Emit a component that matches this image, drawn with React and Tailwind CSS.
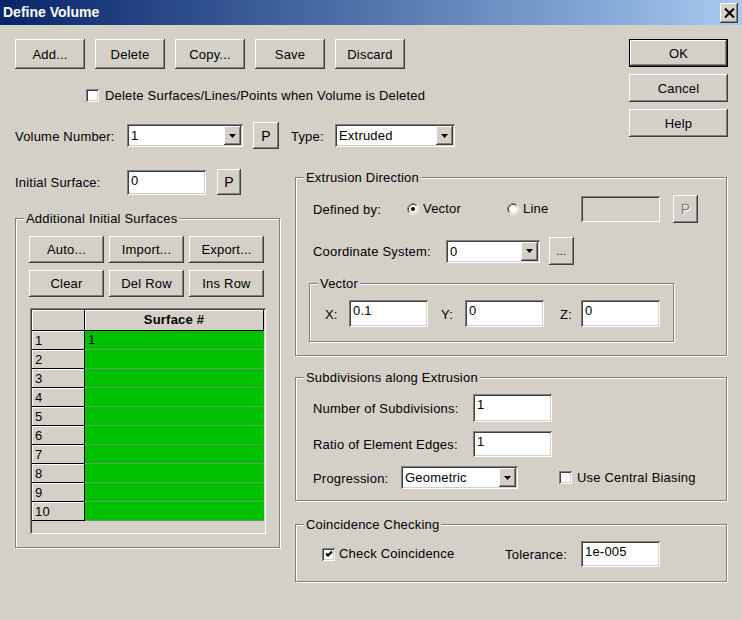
import React from "react";

const RAISED =
  "shadow-[inset_-1px_-1px_#404040,inset_1px_1px_#ffffff,inset_-2px_-2px_#808080,inset_2px_2px_#d4d0c8]";
const DEFAULT_BTN =
  "shadow-[inset_0_0_0_1px_#000000,inset_-2px_-2px_#404040,inset_2px_2px_#ffffff,inset_-3px_-3px_#808080]";
const SUNKEN =
  "shadow-[inset_1px_1px_#808080,inset_-1px_-1px_#ffffff,inset_2px_2px_#404040,inset_-2px_-2px_#d4d0c8]";
const HDR = "bg-[#d4d0c8] border-r border-b border-black shadow-[inset_1px_1px_#ffffff]";

function Btn({ className = "", children, disabled, isDefault }) {
  return (
    <button
      type="button"
      className={`flex items-center justify-center bg-[#d4d0c8] leading-none ${isDefault ? DEFAULT_BTN : RAISED} ${
        disabled ? "text-[#808080] [text-shadow:1px_1px_#ffffff]" : "text-black"
      } ${className}`}
    >
      {children}
    </button>
  );
}

function Field({ className = "", value, disabled }) {
  return (
    <div
      className={`${SUNKEN} ${disabled ? "bg-[#d4d0c8]" : "bg-white"} px-[4px] pt-[3px] leading-[15px] ${className}`}
    >
      {value}
    </div>
  );
}

function Combo({ className = "", value }) {
  return (
    <div className={`${SUNKEN} bg-white flex items-center p-[2px] ${className}`}>
      <span className="flex-1 pl-[2px] leading-[15px]">{value}</span>
      <div className={`w-[17px] h-full bg-[#d4d0c8] ${RAISED} flex items-center justify-center`}>
        <svg width="7" height="4" viewBox="0 0 7 4">
          <path d="M0 0h7L3.5 4z" fill="#000" />
        </svg>
      </div>
    </div>
  );
}

function Check({ checked }) {
  return (
    <div className={`w-[13px] h-[13px] shrink-0 bg-white ${SUNKEN} flex items-center justify-center`}>
      {checked && (
        <svg width="8" height="8" viewBox="0 0 8 8">
          <path d="M1 3.5 L3 5.5 L7 1.5" stroke="#000" strokeWidth="2" fill="none" />
        </svg>
      )}
    </div>
  );
}

function Radio({ checked }) {
  return (
    <svg width="12" height="12" viewBox="0 0 12 12" className="shrink-0">
      <circle cx="6" cy="6" r="5" fill="#fff" />
      <path d="M2.11 9.89 A5.5 5.5 0 0 1 9.89 2.11" stroke="#808080" fill="none" />
      <path d="M2.82 9.18 A4.5 4.5 0 0 1 9.18 2.82" stroke="#404040" fill="none" />
      <path d="M9.89 2.11 A5.5 5.5 0 0 1 2.11 9.89" stroke="#ffffff" fill="none" />
      <path d="M9.18 2.82 A4.5 4.5 0 0 1 2.82 9.18" stroke="#d4d0c8" fill="none" />
      {checked && <circle cx="6" cy="6" r="2" fill="#000" />}
    </svg>
  );
}

function Group({ title, className = "", children }) {
  return (
    <div className={`border border-[#808080] shadow-[inset_1px_1px_#ffffff,1px_1px_#ffffff] ${className}`}>
      <div className="-mt-[8px] ml-[8px] w-fit px-[2px] bg-[#d4d0c8] leading-[15px]">{title}</div>
      {children}
    </div>
  );
}

function SurfaceGrid() {
  const rows = [1, 2, 3, 4, 5, 6, 7, 8, 9, 10];
  return (
    <div className={`mt-[11px] ml-[14px] w-[236px] h-[226px] p-[2px] bg-[#d4d0c8] ${SUNKEN}`}>
      <div className="flex h-[21px]">
        <div className={`w-[53px] ${HDR}`} />
        <div className={`w-[179px] ${HDR} flex items-center justify-center font-bold`}>Surface #</div>
      </div>
      {rows.map((n) => (
        <div key={n} className="flex h-[19px]">
          <div className={`w-[53px] ${HDR} pl-[3px] pt-[1px] flex items-center`}>{n}</div>
          <div className="w-[179px] bg-[#00c000] border-b border-[#5f9f5f] pl-[3px] flex items-center">
            {n === 1 ? "1" : ""}
          </div>
        </div>
      ))}
    </div>
  );
}

export default function App() {
  return (
    <div className="w-[742px] h-[620px] overflow-hidden bg-[#d4d0c8] text-black text-[13px] tracking-[0.2px] font-['Liberation_Sans',Arial,sans-serif]">
      {/* title bar */}
      <div className="h-[25px] flex items-center justify-between pl-[3px] pr-[4px] bg-linear-to-r from-[#0a246a] to-[#a6caf0]">
        <span className="text-white font-bold text-[14px] tracking-normal">Define Volume</span>
        <div className={`w-[18px] h-[20px] bg-[#d4d0c8] ${RAISED} flex items-center justify-center`}>
          <svg width="11" height="10" viewBox="0 0 11 10">
            <path d="M1 0.5 L10 9.5 M10 0.5 L1 9.5" stroke="#000" strokeWidth="2" />
          </svg>
        </div>
      </div>

      {/* top section */}
      <div className="flex pl-[15px] pt-[14px]">
        <div className="flex-1">
          <div className="flex gap-[10px] h-[30px]">
            <Btn className="w-[70px] h-[30px]">Add...</Btn>
            <Btn className="w-[70px] h-[30px]">Delete</Btn>
            <Btn className="w-[70px] h-[30px]">Copy...</Btn>
            <Btn className="w-[70px] h-[30px]">Save</Btn>
            <Btn className="w-[70px] h-[30px]">Discard</Btn>
          </div>
          <div className="mt-[16px] h-[20px] pl-[71px] flex items-center gap-[6px]">
            <Check />
            <span className="pt-[1px]">Delete Surfaces/Lines/Points when Volume is Deleted</span>
          </div>
          <div className="mt-[17px] h-[27px] flex items-center">
            <span className="w-[112px] pt-[2px]">Volume Number:</span>
            <Combo className="w-[116px] h-[23px]" value="1" />
            <Btn className="ml-[10px] w-[26px] h-[27px] text-[14px]">P</Btn>
            <span className="ml-[12px] w-[44px] pt-[2px]">Type:</span>
            <Combo className="w-[120px] h-[23px]" value="Extruded" />
          </div>
        </div>
        <div className="w-[99px] mr-[14px] flex flex-col gap-[7px]">
          <Btn isDefault className="w-[99px] h-[28px]">OK</Btn>
          <Btn className="w-[99px] h-[28px]">Cancel</Btn>
          <Btn className="w-[99px] h-[28px]">Help</Btn>
        </div>
      </div>

      {/* lower section */}
      <div className="flex pl-[15px] mt-[20px] gap-[15px]">
        {/* left column */}
        <div className="w-[265px]">
          <div className="h-[26px] flex items-center">
            <span className="w-[112px] pt-[2px]">Initial Surface:</span>
            <Field className="w-[79px] h-[25px]" value="0" />
            <Btn className="ml-[11px] w-[24px] h-[26px] text-[14px]">P</Btn>
          </div>
          <Group title="Additional Initial Surfaces" className="mt-[23px] w-[265px] h-[330px]">
            <div className="mt-[10px] pl-[13px] flex gap-[5px]">
              <Btn className="w-[75px] h-[27px]">Auto...</Btn>
              <Btn className="w-[75px] h-[27px]">Import...</Btn>
              <Btn className="w-[75px] h-[27px]">Export...</Btn>
            </div>
            <div className="mt-[7px] pl-[13px] flex gap-[5px]">
              <Btn className="w-[75px] h-[27px]">Clear</Btn>
              <Btn className="w-[75px] h-[27px]">Del Row</Btn>
              <Btn className="w-[75px] h-[27px]">Ins Row</Btn>
            </div>
            <SurfaceGrid />
          </Group>
        </div>

        {/* right column */}
        <div className="w-[432px] pt-[8px]">
          <Group title="Extrusion Direction" className="w-[432px] h-[179px]">
            <div className="mt-[10px] h-[28px] pl-[17px] flex items-center">
              <span className="w-[94px] pt-[2px]">Defined by:</span>
              <div className="w-[100px] flex items-center gap-[4px]">
                <Radio checked />
                <span>Vector</span>
              </div>
              <div className="w-[74px] flex items-center gap-[4px]">
                <Radio />
                <span>Line</span>
              </div>
              <Field disabled className="w-[79px] h-[26px]" value="" />
              <Btn disabled className="ml-[13px] w-[25px] h-[28px] text-[14px]">P</Btn>
            </div>
            <div className="mt-[14px] h-[28px] pl-[17px] flex items-center">
              <span className="w-[133px] pt-[2px]">Coordinate System:</span>
              <Combo className="w-[94px] h-[23px]" value="0" />
              <Btn className="ml-[9px] w-[25px] h-[28px] text-[11px]">...</Btn>
            </div>
            <Group title="Vector" className="ml-[13px] mt-[18px] w-[365px] h-[59px]">
              <div className="mt-[9px] h-[27px] pl-[15px] flex items-center">
                <span className="w-[24px] pt-[2px]">X:</span>
                <Field className="w-[79px] h-[27px]" value="0.1" />
                <span className="ml-[13px] w-[24px] pt-[2px]">Y:</span>
                <Field className="w-[79px] h-[27px]" value="0" />
                <span className="ml-[16px] w-[21px] pt-[2px]">Z:</span>
                <Field className="w-[79px] h-[27px]" value="0" />
              </div>
            </Group>
          </Group>

          <Group title="Subdivisions along Extrusion" className="mt-[21px] w-[432px] h-[124px]">
            <div className="mt-[9px] h-[28px] pl-[17px] flex items-center">
              <span className="w-[160px] pt-[2px]">Number of Subdivisions:</span>
              <Field className="w-[79px] h-[28px]" value="1" />
            </div>
            <div className="mt-[9px] h-[26px] pl-[17px] flex items-center">
              <span className="w-[160px] pt-[2px]">Ratio of Element Edges:</span>
              <Field className="w-[79px] h-[26px]" value="1" />
            </div>
            <div className="mt-[9px] h-[23px] pl-[17px] flex items-center">
              <span className="w-[88px] pt-[2px]">Progression:</span>
              <Combo className="w-[117px] h-[23px]" value="Geometric" />
              <div className="ml-[41px] flex items-center gap-[5px]">
                <Check />
                <span>Use Central Biasing</span>
              </div>
            </div>
          </Group>

          <Group title="Coincidence Checking" className="mt-[23px] w-[432px] h-[58px]">
            <div className="mt-[9px] h-[26px] pl-[26px] flex items-center">
              <div className="w-[183px] flex items-center gap-[4px]">
                <Check checked />
                <span>Check Coincidence</span>
              </div>
              <span className="w-[76px] pt-[2px]">Tolerance:</span>
              <Field className="w-[79px] h-[26px]" value="1e-005" />
            </div>
          </Group>
        </div>
      </div>
    </div>
  );
}
